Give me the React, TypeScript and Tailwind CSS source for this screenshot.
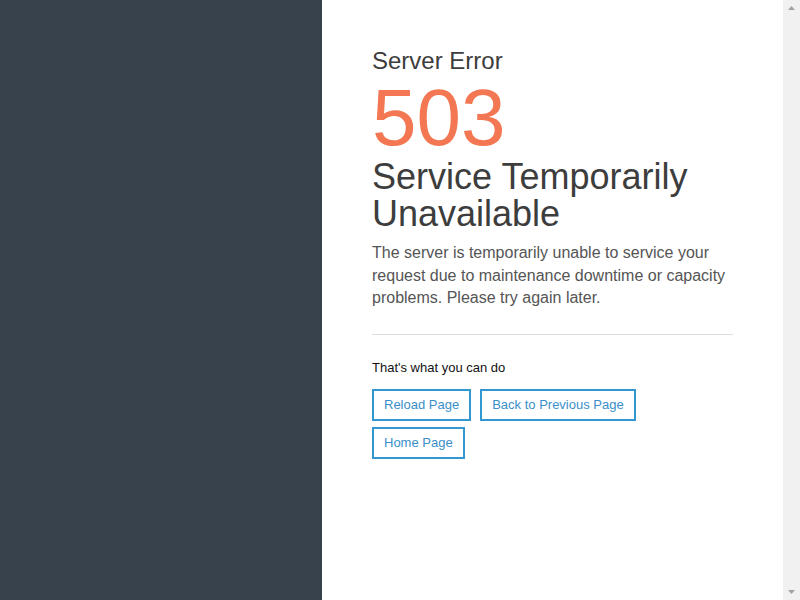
import React from "react";

const actions = [
  { label: "Reload Page" },
  { label: "Back to Previous Page" },
  { label: "Home Page" },
];

export default function App() {
  return (
    <div className="flex h-[600px] w-[800px] overflow-hidden bg-white font-['Liberation_Sans',Arial,sans-serif]">
      {/* side panel */}
      <div className="w-[322px] shrink-0 bg-[#37424d]" />

      {/* content */}
      <main className="w-[461px] shrink-0 px-[50px] pt-[47px]">
        <h2 className="text-[24px] leading-[28px] text-[#3d3d3d]">Server Error</h2>
        <h1 className="mt-[5px] text-[80px] leading-[76px] text-[#f37753]">503</h1>
        <h3 className="mt-[2px] text-[36px] leading-[37px] text-[#3d3d3d]">
          Service Temporarily Unavailable
        </h3>
        <p className="mt-[10px] text-[16px] leading-[22.5px] text-[#555555]">
          The server is temporarily unable to service your request due to maintenance
          downtime or capacity problems. Please try again later.
        </p>

        <hr className="mt-[24px] border-t border-[#dddddd]" />

        <p className="mt-[24px] text-[13px] leading-[18px] text-[#111111]">
          That's what you can do
        </p>
        <div className="mt-[12px] flex flex-wrap gap-x-[9px] gap-y-[6px]">
          {actions.map((a) => (
            <button
              key={a.label}
              className="h-[32px] border-2 border-[#3398d0] px-[10px] text-[13px] text-[#3b8fc9]"
            >
              {a.label}
            </button>
          ))}
        </div>
      </main>

      {/* scrollbar */}
      <div className="flex w-[17px] shrink-0 flex-col items-center justify-between bg-[#f1f1f1] py-[6px]">
        <svg width="7" height="4" viewBox="0 0 7 4">
          <path d="M3.5 0 L7 4 L0 4 Z" fill="#a3a3a3" />
        </svg>
        <svg width="7" height="4" viewBox="0 0 7 4">
          <path d="M0 0 L7 0 L3.5 4 Z" fill="#a3a3a3" />
        </svg>
      </div>
    </div>
  );
}
